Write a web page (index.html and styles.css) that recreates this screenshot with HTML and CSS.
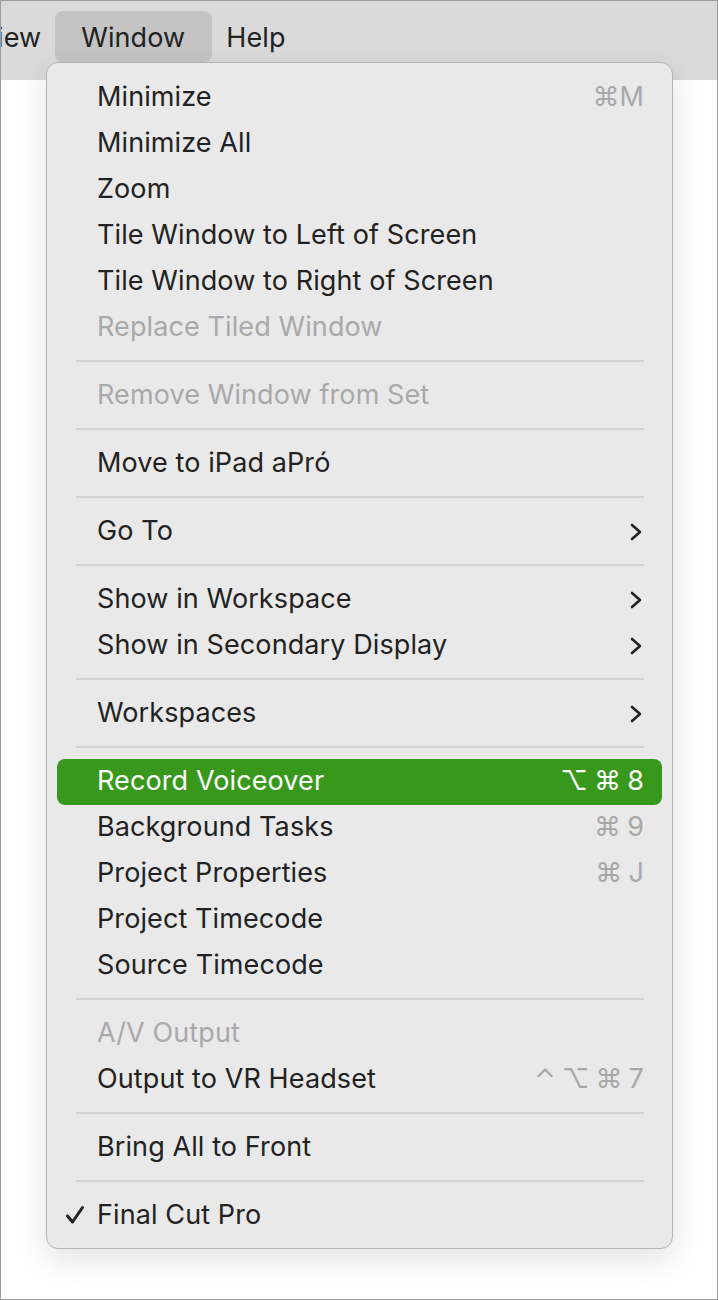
FILE: index.html
```html
<!DOCTYPE html>
<html lang="en">
<head>
    <meta charset="UTF-8">
    <title>Window Menu</title>
    <link rel="stylesheet" href="styles.css">
</head>
<body>

<div class="screen">
    <!-- Menu bar -->
    <div class="menubar">
        <span class="bar-item bar-first">iew</span>
        <span class="bar-item bar-open">Window</span>
        <span class="bar-item">Help</span>
    </div>

    <div class="content"></div>

    <!-- Dropdown menu -->
    <div class="menu">
        <div class="item"><span class="label">Minimize</span><span class="keys">⌘M</span></div>
        <div class="item"><span class="label">Minimize All</span></div>
        <div class="item"><span class="label">Zoom</span></div>
        <div class="item"><span class="label">Tile Window to Left of Screen</span></div>
        <div class="item"><span class="label">Tile Window to Right of Screen</span></div>
        <div class="item disabled"><span class="label">Replace Tiled Window</span></div>
        <div class="sep"></div>
        <div class="item disabled"><span class="label">Remove Window from Set</span></div>
        <div class="sep"></div>
        <div class="item"><span class="label">Move to iPad aPró</span></div>
        <div class="sep"></div>
        <div class="item"><span class="label">Go To</span><svg class="chev" viewBox="0 0 12 18"><path d="M2 2l8 7-8 7"/></svg></div>
        <div class="sep"></div>
        <div class="item"><span class="label">Show in Workspace</span><svg class="chev" viewBox="0 0 12 18"><path d="M2 2l8 7-8 7"/></svg></div>
        <div class="item"><span class="label">Show in Secondary Display</span><svg class="chev" viewBox="0 0 12 18"><path d="M2 2l8 7-8 7"/></svg></div>
        <div class="sep"></div>
        <div class="item"><span class="label">Workspaces</span><svg class="chev" viewBox="0 0 12 18"><path d="M2 2l8 7-8 7"/></svg></div>
        <div class="sep"></div>
        <div class="item active"><span class="label">Record Voiceover</span><span class="keys"><span>⌥</span><span>⌘</span><span>8</span></span></div>
        <div class="item"><span class="label">Background Tasks</span><span class="keys"><span>⌘</span><span>9</span></span></div>
        <div class="item"><span class="label">Project Properties</span><span class="keys"><span>⌘</span><span>J</span></span></div>
        <div class="item"><span class="label">Project Timecode</span></div>
        <div class="item"><span class="label">Source Timecode</span></div>
        <div class="sep"></div>
        <div class="item disabled"><span class="label">A/V Output</span></div>
        <div class="item"><span class="label">Output to VR Headset</span><span class="keys"><span>⌃</span><span>⌥</span><span>⌘</span><span>7</span></span></div>
        <div class="sep"></div>
        <div class="item"><span class="label">Bring All to Front</span></div>
        <div class="sep"></div>
        <div class="item"><svg class="check" viewBox="0 0 20 20"><path d="M2.5 11l5 6L17.5 2.5"/></svg><span class="label">Final Cut Pro</span></div>
    </div>
</div>

</body>
</html>
```

FILE: styles.css
```css
/* Page frame */
body {
    margin: 0;
    font-family: 'Inter', 'Noto Sans', sans-serif;
    color: #222;
}

.screen {
    position: relative;
    width: 718px;
    height: 1300px;
    box-sizing: border-box;
    border: 1px solid #9c9c9c;
    background: #fff;
    overflow: hidden;
}

/* Menu bar */
.menubar {
    display: flex;
    align-items: center;
    height: 79px;
    background: #dadada;
    font-size: 27px;
    letter-spacing: 0.1px;
}

.bar-item {
    line-height: 49px;
    padding: 2px 14px 0;
    margin-top: -8px;
}

.bar-first {
    padding-left: 0;
    margin-left: -4px;
}

.bar-open {
    background: #c4c4c4;
    border-radius: 8px;
    padding: 2px 27px 0 26px;
}

.content {
    height: 100%;
}

/* Dropdown menu */
.menu {
    position: absolute;
    left: 45px;
    top: 61px;
    width: 627px;
    box-sizing: border-box;
    padding: 12px 10px 9px;
    background: #e9e9e9;
    border: 1px solid #b4b4b4;
    border-radius: 12px;
    box-shadow: 0 10px 30px rgba(0, 0, 0, 0.12);
    font-size: 27px;
    letter-spacing: 0.1px;
}

.item {
    position: relative;
    display: flex;
    align-items: center;
    height: 46px;
    box-sizing: border-box;
    padding: 0 18px 3px 40px;
    border-radius: 8px;
}

.label {
    flex: 1;
    white-space: nowrap;
}

.disabled {
    color: #a9a9a9;
}

.active {
    background: #38981c;
    color: #fff;
}

.keys {
    display: flex;
    gap: 6px;
    color: #a8a8a8;
}

.active .keys {
    color: #fff;
}

.chev {
    width: 12px;
    height: 18px;
    margin: 3px 2px 0 0;
    fill: none;
    stroke: #222;
    stroke-width: 2.6;
    stroke-linecap: round;
    stroke-linejoin: round;
}

.check {
    position: absolute;
    left: 8px;
    top: 12px;
    width: 20px;
    height: 20px;
    fill: none;
    stroke: #222;
    stroke-width: 3;
    stroke-linecap: round;
    stroke-linejoin: round;
}

.sep {
    height: 2px;
    margin: 9px 18px 11px 19px;
    background: #d2d2d2;
}
```
